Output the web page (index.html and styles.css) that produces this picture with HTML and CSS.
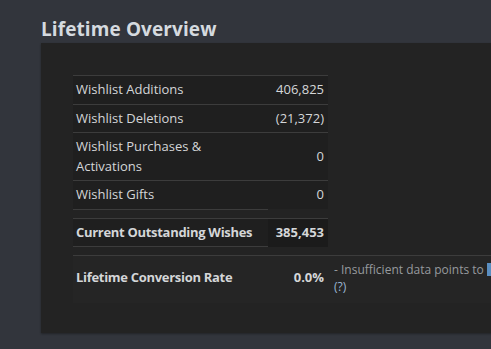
FILE: index.html
```html
<!DOCTYPE html>
<html>
<head>
<meta charset="utf-8">
<link rel="stylesheet" href="styles.css">
</head>
<body>
<h2 class="title">Lifetime Overview</h2>
<div class="panel">
  <table class="stats">
    <tr><td class="label">Wishlist Additions</td><td class="val">406,825</td></tr>
    <tr><td class="label">Wishlist Deletions</td><td class="val">(21,372)</td></tr>
    <tr><td class="label">Wishlist Purchases &amp; Activations</td><td class="val">0</td></tr>
    <tr class="last"><td class="label">Wishlist Gifts</td><td class="val">0</td></tr>
  </table>
  <table class="stats total">
    <tr class="last"><td class="label">Current Outstanding Wishes</td><td class="val">385,453</td></tr>
  </table>
  <table class="stats rate">
    <tr>
      <td class="label">Lifetime Conversion Rate</td>
      <td class="val">0.0%</td>
      <td class="note">- Insufficient data points to <span class="hl"></span><br><span class="q">(?)</span></td>
    </tr>
  </table>
</div>
</body>
</html>
```
FILE: styles.css
```css
html, body {
  margin: 0;
  padding: 0;
}
body {
  background: #32353c;
  font-family: "Open Sans", "Liberation Sans", sans-serif;
  color: #d4d6d8;
  overflow: hidden;
  width: 491px;
  height: 349px;
}
.title {
  margin: 0;
  padding: 16px 0 0 41px;
  height: 43px;
  box-sizing: border-box;
  font-size: 19px;
  line-height: 26px;
  font-weight: 700;
  color: #d5dadf;
  letter-spacing: 0.1px;
}
.panel {
  margin-left: 41px;
  width: 600px;
  height: 290px;
  box-sizing: border-box;
  background: #232323;
  padding: 32px 0 0 32px;
  box-shadow: 0 1px 2px rgba(0,0,0,0.35);
}
.stats {
  border-collapse: collapse;
  font-size: 13px;
  line-height: 19.5px;
  table-layout: fixed;
}
.stats td {
  border-top: 1px solid #3c3c3c;
  padding: 4px 3px 4px 3px;
  background: #1f1f1f;
  vertical-align: middle;
}
.stats .label {
  width: 189px;
  text-align: left;
}
.stats .val {
  width: 53px;
  text-align: right;
  padding-right: 4px;
}
.stats tr.last .label {
  border-bottom: 1px solid #3c3c3c;
}
.total {
  margin-top: 8px;
}
.total td {
  font-weight: 700;
  letter-spacing: -0.3px;
  padding-top: 4px;
  padding-bottom: 4px;
}
.total .val {
  background: #1b1b1b;
  letter-spacing: 0;
}
.rate {
  margin-top: 8px;
}
.rate td {
  background: #252525;
  font-weight: 700;
  letter-spacing: -0.3px;
  padding-top: 5px;
  padding-bottom: 8px;
}
.rate td.val {
  letter-spacing: 0;
}
.rate .note {
  width: 200px;
  font-weight: 400;
  letter-spacing: 0;
  font-size: 12px;
  line-height: 17px;
  color: #979a9e;
  padding-left: 6px;
  white-space: nowrap;
}
.hl {
  display: inline-block;
  width: 8px;
  height: 13px;
  vertical-align: -2px;
  background: #5a8ec0;
}
.q {
  color: #9ab6d2;
}
```
